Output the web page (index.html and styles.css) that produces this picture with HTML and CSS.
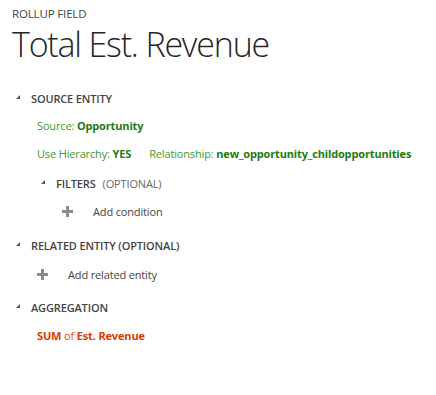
FILE: index.html
```html
<!DOCTYPE html>
<html lang="en">
<head>
    <meta charset="UTF-8">
    <title>Rollup Field</title>
    <link rel="stylesheet" href="styles.css">
</head>
<body>
    <div class="page">
        <div class="kicker">ROLLUP FIELD</div>
        <h1 class="title">Total Est. Revenue</h1>

        <div class="section">
            <div class="section-head"><span class="caret"></span>SOURCE ENTITY</div>
            <div class="body">
                <div class="row green">Source: <b>Opportunity</b></div>
                <div class="row green"><span>Use Hierarchy: <b>YES</b></span><span class="rel">Relationship: <b>new_opportunity_childopportunities</b></span></div>
                <div class="section sub">
                    <div class="section-head"><span class="caret"></span>FILTERS <span class="opt">(OPTIONAL)</span></div>
                    <div class="add"><span class="plus"></span>Add condition</div>
                </div>
            </div>
        </div>

        <div class="section">
            <div class="section-head"><span class="caret"></span>RELATED ENTITY (OPTIONAL)</div>
            <div class="add"><span class="plus"></span>Add related entity</div>
        </div>

        <div class="section agg">
            <div class="section-head"><span class="caret"></span>AGGREGATION</div>
            <div class="row orange"><b>SUM</b> of <b>Est. Revenue</b></div>
        </div>
    </div>
</body>
</html>
```

FILE: styles.css
```css
* {
    margin: 0;
    padding: 0;
    box-sizing: border-box;
}

body {
    background: #ffffff;
    color: #444444;
    font-family: "Open Sans", "Noto Sans", sans-serif;
    font-size: 11px;
    letter-spacing: -0.15px;
}

.page {
    padding: 6px 12px;
}

.kicker {
    font-size: 11.5px;
    color: #444;
    line-height: 16px;
}

.title {
    font-size: 34px;
    font-weight: 300;
    color: #262626;
    line-height: 44px;
    letter-spacing: -1.2px;
    margin-bottom: 22px;
}

.section-head {
    display: flex;
    align-items: center;
    height: 20px;
    font-weight: 600;
    color: #444;
    padding-left: 4px;
}

.caret {
    width: 0;
    height: 0;
    border-left: 4px solid transparent;
    border-bottom: 4px solid #555;
    margin-right: 11px;
    margin-top: -3px;
}

.opt {
    font-weight: 400;
    color: #666;
    margin-left: 7px;
}

.body {
    padding-top: 8px;
}

.row {
    padding-left: 25px;
    height: 20px;
    line-height: 20px;
    margin-bottom: 8px;
    white-space: nowrap;
}

.green {
    color: #3f9a2f;
}

.green b {
    color: #1f7a0f;
    font-weight: 700;
}

.rel {
    margin-left: 18px;
}

.orange {
    color: #d9531e;
    margin-top: 9px;
}

.orange b {
    font-weight: 700;
    color: #d83b01;
}

.sub {
    padding: 1px 0 0 25px;
}

.add {
    display: flex;
    align-items: center;
    height: 20px;
    margin: 9px 0 12px 25px;
    color: #444;
}

.sub .add {
    margin: 8px 0 14px 25px;
}

.agg {
    padding-top: 1px;
}

.plus {
    position: relative;
    width: 11px;
    height: 11px;
    margin-right: 20px;
}

.plus::before,
.plus::after {
    content: "";
    position: absolute;
    background: #8a8a8a;
}

.plus::before {
    left: 0;
    top: 4px;
    width: 11px;
    height: 3px;
}

.plus::after {
    left: 4px;
    top: 0;
    width: 3px;
    height: 11px;
}
```
